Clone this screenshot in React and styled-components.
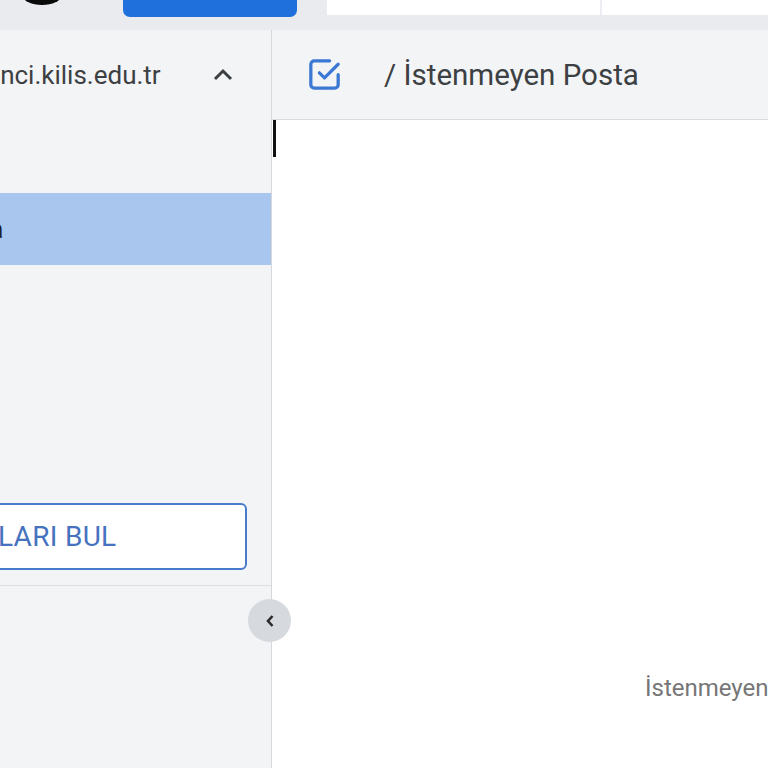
import React from 'react';
import styled, { createGlobalStyle } from 'styled-components';

const GlobalStyle = createGlobalStyle`
  html, body {
    margin: 0;
    padding: 0;
    width: 768px;
    height: 768px;
    overflow: hidden;
    background: #ffffff;
    font-family: Roboto, "Noto Sans", Arial, sans-serif;
  }
`;

const Page = styled.div`
  width: 768px;
  height: 768px;
  display: flex;
  flex-direction: column;
`;

const TopBar = styled.header`
  height: 30px;
  flex-shrink: 0;
  background: #e9ebee;
  display: flex;
  align-items: flex-start;
`;

const LogoBlob = styled.div`
  width: 62px;
  height: 6px;
  display: flex;
  justify-content: flex-end;
`;

const ComposeButton = styled.div`
  margin-left: 61px;
  width: 174px;
  height: 17px;
  background: #1f6fdc;
  border-radius: 0 0 7px 7px;
`;

const SearchBox = styled.div`
  margin-left: 30px;
  height: 15px;
  flex: 1;
  display: flex;
  background: #ffffff;
`;

const SearchPart = styled.div`
  height: 100%;
  width: ${p => p.$w}px;
  border-right: ${p => (p.$divider ? '2px solid #eceef1' : 'none')};
  flex: ${p => (p.$w ? 'none' : 1)};
`;

const Body = styled.div`
  flex: 1;
  display: flex;
  min-height: 0;
`;

const Sidebar = styled.aside`
  position: relative;
  width: 271px;
  flex-shrink: 0;
  background: #f3f4f6;
  border-right: 1px solid #d6d8dc;
  z-index: 2;
`;

const SidebarInner = styled.div`
  height: 100%;
  overflow: hidden;
  display: flex;
  flex-direction: column;
`;

const AccountRow = styled.div`
  height: 90px;
  display: flex;
  align-items: center;
  justify-content: space-between;
  padding-right: 38px;
`;

const AccountText = styled.span`
  margin-left: -75px;
  font-size: 26px;
  color: #3c4043;
  white-space: nowrap;
`;

const NavList = styled.nav`
  margin-top: 73px;
  display: flex;
  flex-direction: column;
`;

const FolderRow = styled.div`
  height: 72px;
  display: flex;
  align-items: center;
  margin-left: -270px;
  padding-left: 74px;
  background: ${p => (p.$active ? '#a9c6ee' : 'transparent')};
  font-size: 25px;
  color: #202124;
  white-space: nowrap;
`;

const FindButton = styled.button`
  margin: 22px 0 0 -242px;
  width: 489px;
  height: 67px;
  flex-shrink: 0;
  background: #ffffff;
  border: 2px solid #4a7acb;
  border-radius: 6px;
  font-family: Roboto, Arial, sans-serif;
  font-size: 28px;
  color: #4672c0;
  letter-spacing: 0.3px;
  display: flex;
  align-items: center;
  justify-content: center;
  padding: 0 17px 0 0;
`;

const Divider = styled.hr`
  margin: 15px 0 0;
  border: none;
  border-top: 1px solid #dcdee2;
`;

const CollapseButton = styled.div`
  position: absolute;
  top: 569px;
  right: -20px;
  width: 43px;
  height: 43px;
  border-radius: 50%;
  background: #d6d9de;
  display: flex;
  align-items: center;
  justify-content: center;
`;

const Main = styled.main`
  flex: 1;
  display: flex;
  flex-direction: column;
  overflow: hidden;
  background: #ffffff;
`;

const MainHeader = styled.div`
  height: 89px;
  flex-shrink: 0;
  background: #f3f4f6;
  border-bottom: 1px solid #d9dbdf;
  display: flex;
  align-items: center;
  padding-left: 32px;
  gap: 39px;
`;

const Breadcrumb = styled.span`
  font-size: 29.5px;
  color: #3c4043;
  white-space: nowrap;
`;

const Caret = styled.div`
  width: 3px;
  height: 37px;
  background: #111;
  margin-left: 1px;
`;

const EmptyText = styled.div`
  margin-top: 516px;
  padding-left: 373px;
  font-size: 24px;
  line-height: 30px;
  color: #767676;
  white-space: nowrap;
`;

const ChevronUp = () => (
  <svg width="20" height="14" viewBox="0 0 20 14" fill="none">
    <path d="M2 11 L10 3 L18 11" stroke="#3c4043" strokeWidth="3" />
  </svg>
);

const ChevronLeft = () => (
  <svg width="10" height="14" viewBox="0 0 10 14" fill="none">
    <path d="M7.5 2 L3 7 L7.5 12" stroke="#2b2b2b" strokeWidth="2.6" />
  </svg>
);

const CheckboxIcon = () => (
  <svg width="41" height="41" viewBox="0 0 24 24" fill="none" stroke="#3a78d4" strokeWidth="1.9" strokeLinecap="round" strokeLinejoin="round">
    <path d="M9 11l3 3l8 -8" />
    <path d="M20 12v6a2 2 0 0 1 -2 2h-12a2 2 0 0 1 -2 -2v-12a2 2 0 0 1 2 -2h9" />
  </svg>
);

const Logo = () => (
  <svg width="40" height="6" viewBox="0 0 40 6">
    <ellipse cx="20" cy="-4" rx="19" ry="9" fill="#0a0a0a" />
  </svg>
);

const folders = [
  { name: 'İstenmeyen Posta', active: true },
  { name: 'Gelen Kutusu' },
  { name: 'Taslaklar' },
  { name: 'Gönderilmiş' },
];

export default function App() {
  return (
    <Page>
      <GlobalStyle />
      <TopBar>
        <LogoBlob>
          <Logo />
        </LogoBlob>
        <ComposeButton />
        <SearchBox>
          <SearchPart $w={273} $divider />
          <SearchPart />
        </SearchBox>
      </TopBar>
      <Body>
        <Sidebar>
          <SidebarInner>
            <AccountRow>
              <AccountText>@ogrenci.kilis.edu.tr</AccountText>
              <ChevronUp />
            </AccountRow>
            <NavList>
              {folders.map(f => (
                <FolderRow key={f.name} $active={f.active}>
                  {f.active ? f.name : ''}
                </FolderRow>
              ))}
            </NavList>
            <FindButton>ARKADAŞLARI BUL</FindButton>
            <Divider />
          </SidebarInner>
          <CollapseButton>
            <ChevronLeft />
          </CollapseButton>
        </Sidebar>
        <Main>
          <MainHeader>
            <CheckboxIcon />
            <Breadcrumb>/ İstenmeyen Posta</Breadcrumb>
          </MainHeader>
          <Caret />
          <EmptyText>İstenmeyen Posta klasörünüz boş</EmptyText>
        </Main>
      </Body>
    </Page>
  );
}
